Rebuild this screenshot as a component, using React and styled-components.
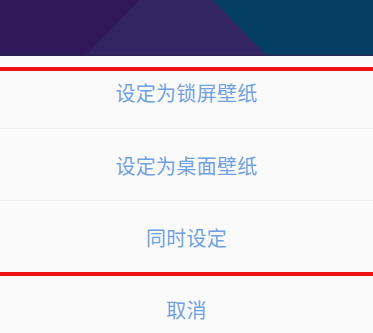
import React from "react";
import styled, { createGlobalStyle } from "styled-components";

const GlobalStyle = createGlobalStyle`
  html, body {
    margin: 0;
    padding: 0;
    background: #fafafa;
  }
  body {
    font-family: "Noto Sans CJK SC", "Noto Sans", sans-serif;
  }
`;

const Screen = styled.div`
  width: 373px;
  height: 333px;
  overflow: hidden;
  display: flex;
  flex-direction: column;
  background: #fafafa;
`;

const Wallpaper = styled.svg`
  display: block;
  flex: 0 0 56px;
  width: 373px;
  height: 56px;
`;

const Sheet = styled.div`
  position: relative;
  display: flex;
  flex-direction: column;
  background: #fafafa;
`;

const Option = styled.div`
  flex: 0 0 72px;
  height: 72px;
  display: flex;
  align-items: center;
  justify-content: center;
  box-sizing: border-box;
  border-top: ${(p) => (p.$first ? "none" : "1px solid #efefef")};
  color: #72a1e0;
  font-size: 20px;
  letter-spacing: 0.3px;
  padding-top: ${(p) => (p.$first ? "0" : "2px")};
`;

const Highlight = styled.div`
  position: absolute;
  left: -10px;
  right: -10px;
  top: 11px;
  height: 209px;
  box-sizing: border-box;
  border: 4px solid #ee1111;
  pointer-events: none;
`;

export default function App() {
  const options = ["设定为锁屏壁纸", "设定为桌面壁纸", "同时设定"];
  return (
    <Screen>
      <GlobalStyle />
      <Wallpaper viewBox="0 0 373 56" preserveAspectRatio="none">
        <rect x="0" y="0" width="373" height="56" fill="#2f1959" />
        <rect x="190" y="0" width="183" height="56" fill="#033f62" />
        <polygon points="140,0 213,0 267,56 85,56" fill="#33255f" />
        <rect x="0" y="54" width="373" height="2" fill="#2a1f52" opacity="0.6" />
      </Wallpaper>
      <Sheet>
        {options.map((o, i) => (
          <Option key={o} $first={i === 0}>
            {o}
          </Option>
        ))}
        <Option>取消</Option>
        <Highlight />
      </Sheet>
    </Screen>
  );
}
